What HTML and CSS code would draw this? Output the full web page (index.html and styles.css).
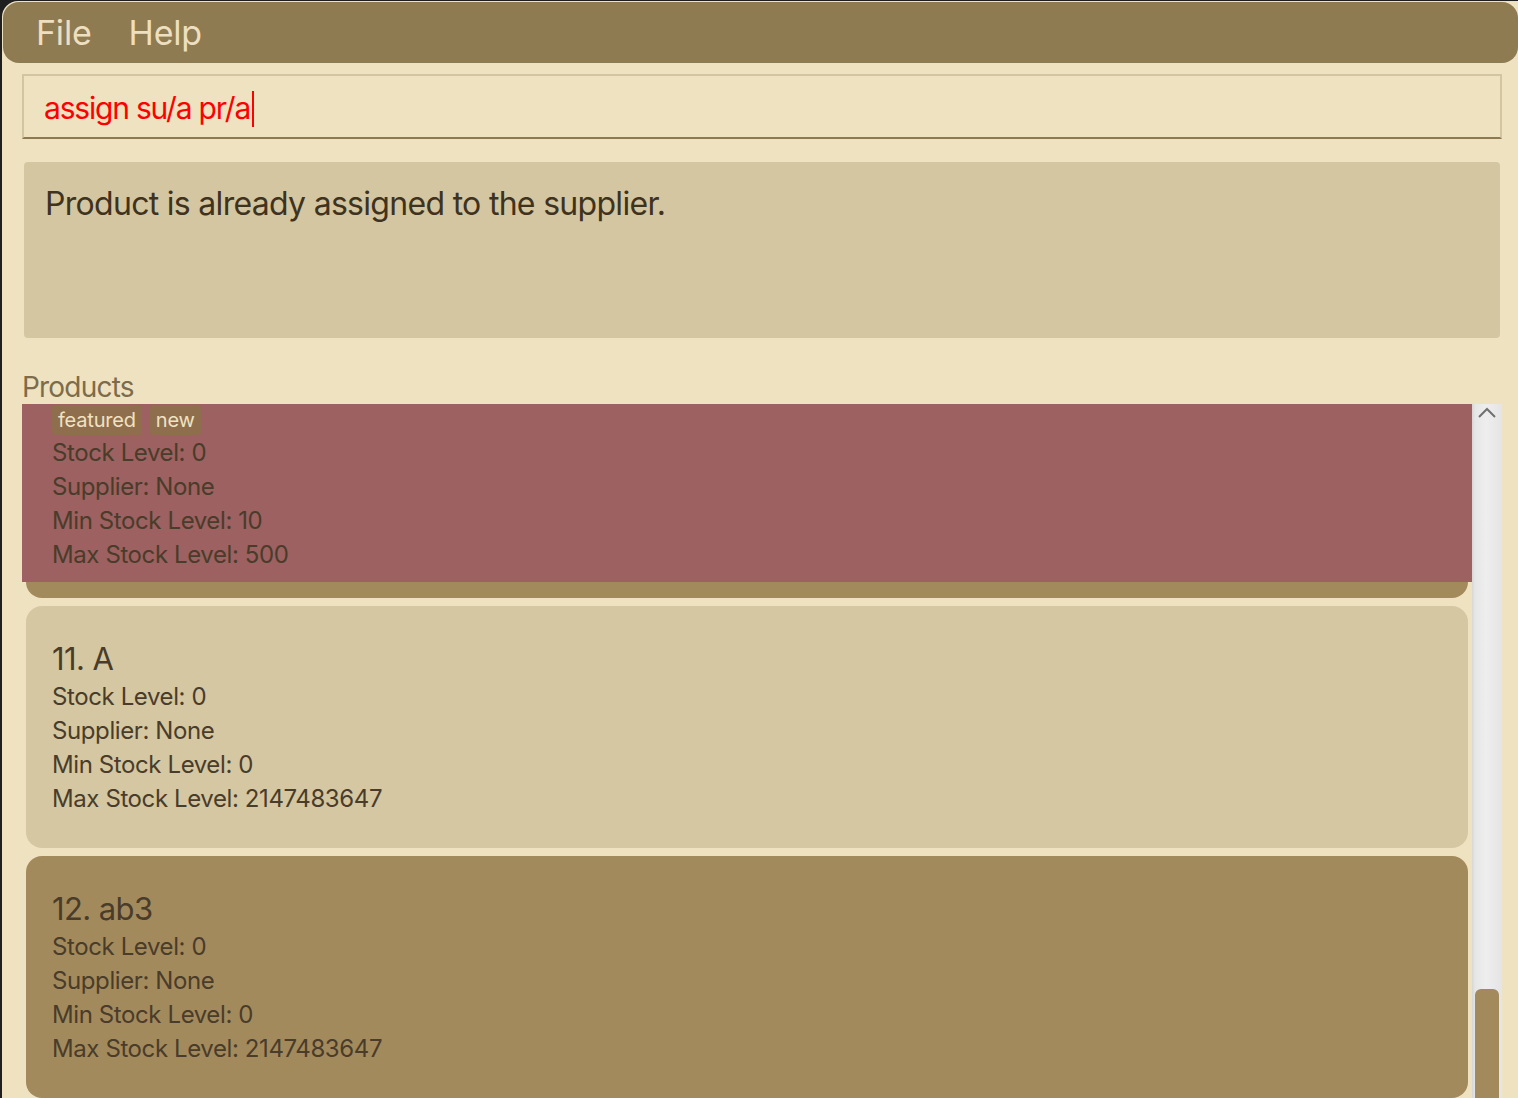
FILE: index.html
```html
<!DOCTYPE html>
<html>
<head>
<meta charset="utf-8">
<link rel="stylesheet" href="styles.css">
</head>
<body>
<div class="app">
  <div class="menubar">
    <span class="menu-item">File</span>
    <span class="menu-item">Help</span>
  </div>
  <div class="content">
    <div class="command-box">
      <span class="command-text">assign su/a pr/a</span><span class="caret"></span>
    </div>
    <div class="result-box">Product is already assigned to the supplier.</div>
    <div class="list-label">Products</div>
    <div class="list-area">
      <div class="list">
        <div class="cell selected">
          <div class="tags">
            <span class="tag">featured</span>
            <span class="tag">new</span>
          </div>
          <div class="line">Stock Level: 0</div>
          <div class="line">Supplier: None</div>
          <div class="line">Min Stock Level: 10</div>
          <div class="line">Max Stock Level: 500</div>
        </div>
        <div class="card-tail"></div>
        <div class="card light">
          <div class="title">11. A</div>
          <div class="line">Stock Level: 0</div>
          <div class="line">Supplier: None</div>
          <div class="line">Min Stock Level: 0</div>
          <div class="line">Max Stock Level: 2147483647</div>
        </div>
        <div class="card dark">
          <div class="title">12. ab3</div>
          <div class="line">Stock Level: 0</div>
          <div class="line">Supplier: None</div>
          <div class="line">Min Stock Level: 0</div>
          <div class="line">Max Stock Level: 2147483647</div>
        </div>
      </div>
      <div class="scrollbar">
        <svg class="arrow" width="20" height="12" viewBox="0 0 20 12">
          <path d="M2 10 L10 2 L18 10" fill="none" stroke="#707070" stroke-width="2"/>
        </svg>
        <div class="thumb"></div>
      </div>
    </div>
  </div>
</div>
</body>
</html>
```
FILE: styles.css
```css
html, body {
  margin: 0;
  padding: 0;
  height: 100%;
  overflow: hidden;
}
body {
  background: #1f1f1f;
  font-family: Inter, "Noto Sans", "Liberation Sans", sans-serif;
}
.app {
  margin: 1px 0 0 2px;
  height: 1097px;
  background: #efe2c1;
  border-top-left-radius: 16px;
  display: flex;
  flex-direction: column;
  overflow: hidden;
}
.menubar {
  height: 61px;
  margin: 1px 0 0 1px;
  background: #8e7b51;
  border-radius: 16px;
  display: flex;
  align-items: center;
  padding-left: 33px;
  gap: 37px;
  flex-shrink: 0;
}
.menu-item {
  color: #eedfc0;
  font-size: 34px;
  line-height: 40px;
  margin-top: 0;
  letter-spacing: -0.2px;
}
.content {
  padding: 0 16px 0 20px;
  display: flex;
  flex-direction: column;
  flex: 1;
  min-height: 0;
}
.command-box {
  margin-top: 11px;
  height: 65px;
  box-sizing: border-box;
  border: 2px solid #d3c59f;
  border-bottom: 2px solid #8e7a50;
  background: #efe2c1;
  display: flex;
  align-items: center;
  padding-left: 20px;
  flex-shrink: 0;
}
.command-text {
  color: #ff0000;
  font-size: 30px;
  line-height: 40px;
  margin-top: 2px;
  letter-spacing: -1.2px;
}
.caret {
  display: inline-block;
  width: 2px;
  height: 36px;
  background: #ff0000;
  margin-left: 2px;
  margin-top: 4px;
}
.result-box {
  margin: 23px 2px 0 2px;
  height: 176px;
  box-sizing: border-box;
  background: #d4c6a1;
  border-radius: 4px;
  padding: 21px 21px;
  color: #3f3320;
  font-size: 32px;
  line-height: 42px;
  letter-spacing: -0.7px;
  flex-shrink: 0;
}
.list-label {
  margin-top: 32px;
  height: 34px;
  font-size: 28px;
  line-height: 34px;
  color: #7d6c4b;
  letter-spacing: -0.8px;
  flex-shrink: 0;
}
.list-area {
  display: flex;
  flex: 1;
  min-height: 0;
}
.list {
  flex: 1;
  display: flex;
  flex-direction: column;
  overflow: hidden;
}
.cell.selected {
  background: #9c6160;
  height: 178px;
  box-sizing: border-box;
  padding: 1px 0 0 30px;
  flex-shrink: 0;
}
.tags {
  display: flex;
  gap: 8px;
  height: 30px;
  margin-bottom: 1px;
}
.tag {
  background: #8e6e4d;
  color: #f0e2c2;
  font-size: 20px;
  line-height: 30px;
  padding: 0 6px;
  border-radius: 3px;
  letter-spacing: -0.2px;
}
.line {
  font-size: 24px;
  line-height: 34px;
  color: #4a3c2a;
  letter-spacing: -0.4px;
}
.card-tail {
  height: 16px;
  margin: 0 4px;
  background: #a38a5c;
  border-radius: 0 0 16px 16px;
  flex-shrink: 0;
}
.card {
  margin: 8px 4px 0 4px;
  height: 242px;
  box-sizing: border-box;
  border-radius: 16px;
  padding: 34px 26px 0 26px;
  flex-shrink: 0;
}
.card.light {
  background: #d5c7a1;
}
.card.dark {
  background: #a38a5c;
}
.title {
  font-size: 31px;
  line-height: 38px;
  color: #4a3c2a;
  margin-bottom: 2px;
  letter-spacing: -0.6px;
}
.scrollbar {
  width: 30px;
  background: linear-gradient(to right, #d6d6d6 0px, #e6e6e6 3px, #eeeeee 14px, #e4e4e4 30px);
  display: flex;
  flex-direction: column;
  align-items: center;
  flex-shrink: 0;
}
.arrow {
  margin-top: 3px;
}
.thumb {
  margin-top: auto;
  width: 24px;
  height: 109px;
  background: #a38a5c;
  border-radius: 6px 6px 0 0;
}
```
